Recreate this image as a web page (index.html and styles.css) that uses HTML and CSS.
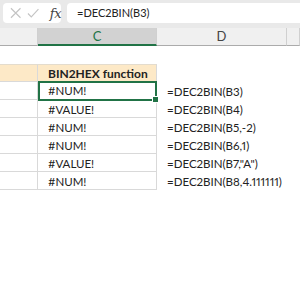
FILE: index.html
```html
<!DOCTYPE html>
<html>
<head>
<meta charset="utf-8">
<link rel="stylesheet" href="styles.css">
</head>
<body>
<div class="fbar">
  <div class="btns">
    <svg class="ico" width="12" height="12" viewBox="0 0 12 12"><path d="M1 1L11 11M11 1L1 11" stroke="#c4c4c4" stroke-width="1.2" fill="none"/></svg>
    <svg class="ico" width="13" height="12" viewBox="0 0 13 12"><path d="M1 6.5L4.5 10L12 2" stroke="#c4c4c4" stroke-width="1.2" fill="none"/></svg>
    <span class="fx">fx</span>
  </div>
  <div class="finput">=DEC2BIN(B3)</div>
</div>
<div class="sheet">
  <div class="row head">
    <div class="h colB"></div>
    <div class="h colC sel">C</div>
    <div class="h colD">D</div>
    <div class="h colE"></div>
  </div>
  <div class="row">
    <div class="c colB"></div><div class="c colC"></div><div class="c colD"></div><div class="c colE"></div>
  </div>
  <div class="row">
    <div class="c colB tan g"></div><div class="c colC tan g bold">BIN2HEX function</div><div class="c colD"></div><div class="c colE"></div>
  </div>
  <div class="row">
    <div class="c colB g"></div><div class="c colC g active">#NUM!<span class="handle"></span></div><div class="c colD">=DEC2BIN(B3)</div><div class="c colE"></div>
  </div>
  <div class="row">
    <div class="c colB g"></div><div class="c colC g">#VALUE!</div><div class="c colD">=DEC2BIN(B4)</div><div class="c colE"></div>
  </div>
  <div class="row">
    <div class="c colB g"></div><div class="c colC g">#NUM!</div><div class="c colD">=DEC2BIN(B5,-2)</div><div class="c colE"></div>
  </div>
  <div class="row">
    <div class="c colB g"></div><div class="c colC g">#NUM!</div><div class="c colD">=DEC2BIN(B6,1)</div><div class="c colE"></div>
  </div>
  <div class="row">
    <div class="c colB g"></div><div class="c colC g">#VALUE!</div><div class="c colD">=DEC2BIN(B7,"A")</div><div class="c colE"></div>
  </div>
  <div class="row">
    <div class="c colB g"></div><div class="c colC g">#NUM!</div><div class="c colD">=DEC2BIN(B8,4.111111)</div><div class="c colE"></div>
  </div>
</div>
</body>
</html>
```
FILE: styles.css
```css
html, body {
  margin: 0;
  padding: 0;
  background: #ffffff;
  width: 300px;
  height: 300px;
  overflow: hidden;
  font-family: "Lato", "Open Sans", sans-serif;
  font-feature-settings: "pnum";
  color: #222;
}
.fbar {
  height: 28px;
  background: #e9e9e9;
  display: flex;
  align-items: flex-start;
  padding-top: 3px;
  box-sizing: border-box;
}
.btns {
  margin-left: 3px;
  width: 58px;
  height: 20px;
  background: #fff;
  border-radius: 4px;
  display: flex;
  align-items: center;
  padding-left: 7px;
  box-sizing: border-box;
  gap: 6px;
}
.ico { display: block; }
.fx {
  font-family: "DejaVu Serif", "Liberation Serif", serif;
  font-style: italic;
  font-size: 13px;
  color: #444;
  margin-left: 4px;
  letter-spacing: -0.5px;
}
.finput {
  margin-left: 6px;
  flex: 1;
  height: 20px;
  background: #fff;
  border-radius: 4px 0 0 4px;
  font-size: 11px;
  line-height: 20px;
  padding-left: 10px;
  color: #222;
}
.sheet { display: flex; flex-direction: column; }
.row { display: flex; height: 18px; }
.colB { width: 38px; }
.colC { width: 119px; }
.colD { width: 130px; }
.colE { width: 13px; }
.h {
  box-sizing: border-box;
  background: #f0f0f0;
  border-bottom: 1px solid #ababab;
  border-right: 1px solid #d0d0d0;
  text-align: center;
  font-size: 13px;
  line-height: 17px;
  color: #444;
}
.h.sel {
  background: #d2d2d2;
  border-bottom: 2px solid #217346;
  color: #217346;
  line-height: 17px;
}
.c {
  box-sizing: border-box;
  font-size: 11.5px;
  line-height: 19px;
  padding-left: 10px;
  white-space: nowrap;
  position: relative;
}
.g {
  border-bottom: 1px solid #d9d9d9;
  border-right: 1px solid #d9d9d9;
}
.tan { background: #fde9c7; border-top: 1px solid #e4dccd; line-height: 17px; }
.bold { font-weight: bold; font-size: 12px; }
.active {
  border: 2px solid #217346;
  padding-left: 8px;
  line-height: 15px;
  margin-top: -1px;
  height: 20px;
  margin-bottom: -1px;
  z-index: 2;
}
.handle {
  position: absolute;
  right: -4px;
  bottom: -4px;
  width: 5px;
  height: 5px;
  background: #217346;
  border: 1px solid #fff;
}
```
